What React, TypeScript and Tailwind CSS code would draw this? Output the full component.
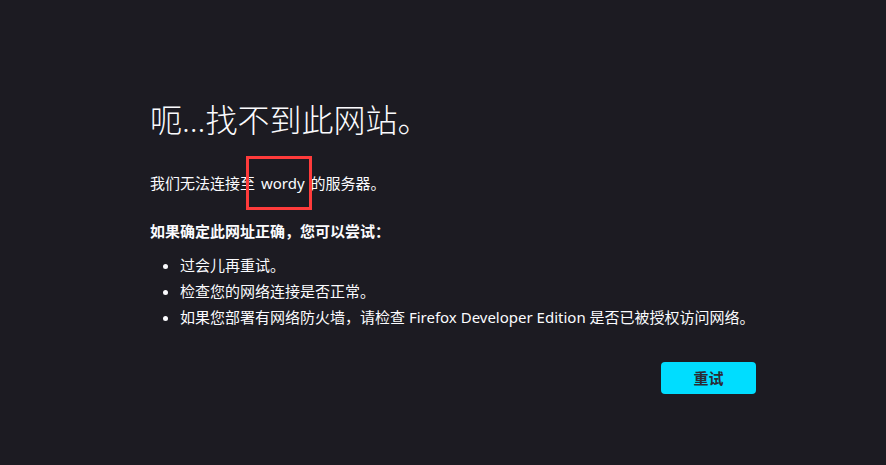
export default function App() {
  return (
    <main
      className="w-[886px] h-[465px] bg-[#1c1b22] text-[#fbfbfe] overflow-hidden relative"
      style={{ fontFamily: '"Noto Sans", "Noto Sans CJK SC", sans-serif' }}
    >
      <section className="pl-[150px] pt-[100px] w-[756px] flex flex-col">
        <h1 className="text-[32px] leading-[40px] font-light">
          呃...找不到此网站。
        </h1>

        <p className="text-[15px] leading-[22px] mt-[32px]">
          我们无法连接至<span className="px-[2px]"> wordy </span>的服务器。
        </p>

        <p className="text-[15px] leading-[22px] font-bold mt-[26px]">
          如果确定此网址正确，您可以尝试：
        </p>

        <ul className="list-disc pl-[30px] mt-[12px] text-[15px] leading-[22px] flex flex-col gap-[4px]">
          <li>过会儿再重试。</li>
          <li>检查您的网络连接是否正常。</li>
          <li>如果您部署有网络防火墙，请检查 Firefox Developer Edition 是否已被授权访问网络。</li>
        </ul>

        <div className="flex justify-end mt-[34px]">
          <button className="w-[95px] h-[32px] rounded-[4px] bg-[#00ddff] text-[#2b2a33] text-[15px] font-bold">
            重试
          </button>
        </div>
      </section>

      <div className="absolute left-[246px] top-[156px] w-[66px] h-[54px] border-[3px] border-[#ff3b3b]" />
    </main>
  );
}
